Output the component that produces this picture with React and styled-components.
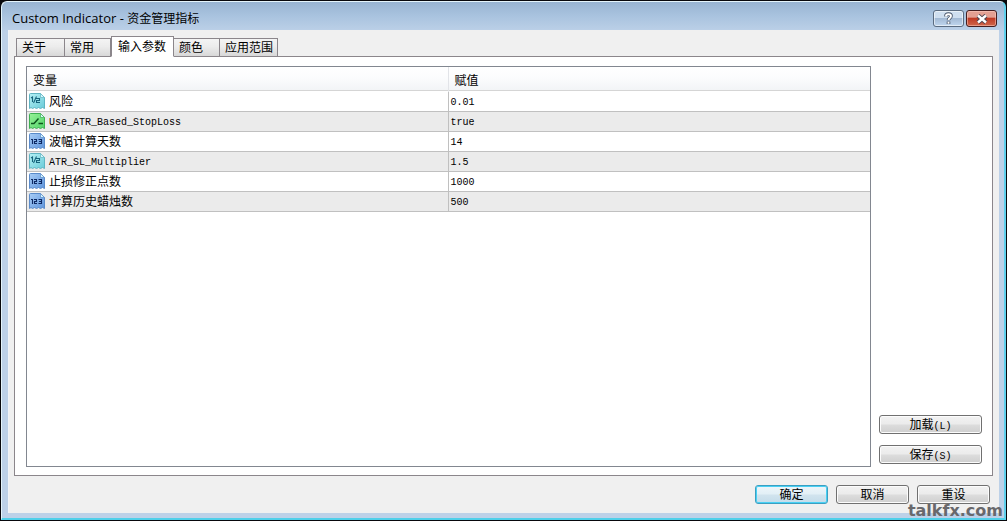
import React, { useState } from "react";
import styled, { createGlobalStyle, css } from "styled-components";

const GlobalStyle = createGlobalStyle`
  * { box-sizing: border-box; }
  body {
    margin: 0;
    background: #08080c;
    color: #000;
    font: 12px/16px "Liberation Mono", "Noto Sans CJK SC", monospace;
  }
`;

const Window = styled.div`
  position: relative;
  display: flex;
  flex-direction: column;
  min-height: calc(100vh - 2px);
  margin: 1px;
  padding: 0 5px 5px 6px;
  border: 1px solid #e4f4fb;
  border-right: 2px solid #5fd0ec;
  border-bottom: 2px solid #4fd0ea;
  border-radius: 6px 6px 0 0;
  background: linear-gradient(#98b4d2 0, #a9c3df 14px, #bdd1e8 30px, #bdd1e8 100%);
`;

const TitleBar = styled.header`
  display: flex;
  align-items: flex-start;
  justify-content: space-between;
  height: 28px;
  padding: 8px 2px 0 4px;
`;

const Title = styled.h1`
  margin: 0;
  font: 12px/16px "Open Sans", "Noto Sans CJK SC", sans-serif;
  white-space: pre;
`;

const TitlePrefix = styled.span`
  font-size: 13px;
`;

const CaptionButtons = styled.div`
  display: flex;
  gap: 2px;
`;

const CaptionButton = styled.button`
  display: flex;
  align-items: center;
  justify-content: center;
  width: 31px;
  height: 17px;
  padding: 0;
  border: 1px solid #5a6b80;
  border-radius: 3px;
  box-shadow: inset 0 0 0 1px rgba(255, 255, 255, 0.55);
  background: linear-gradient(#cfdff0 0 45%, #a3bad5 50%, #c0d6ee);
  ${(p) =>
    p.$close &&
    css`
      border-color: #431e20;
      box-shadow: inset 0 0 0 1px rgba(255, 210, 200, 0.5);
      background: linear-gradient(#e3a093 0 40%, #bf3b25 50%, #d0674b);
    `}
`;

const Client = styled.main`
  display: flex;
  flex: 1;
  flex-direction: column;
  padding: 6px 6px 9px 5px;
  border-left: 1px solid #f1f4f8;
  background: #f0f0f0;
`;

const TabList = styled.div`
  position: relative;
  display: flex;
  align-items: flex-end;
  height: 21px;
  padding-left: 2px;
  margin-bottom: -1px;
`;

const Tab = styled.button`
  width: ${(p) => p.$width}px;
  height: 19px;
  padding: 2px 0 0 5px;
  border: 1px solid #8b868b;
  border-left-width: ${(p) => (p.$first ? 1 : 0)}px;
  background: linear-gradient(#f4f4f4, #ececec 45%, #d8d8d8);
  font: inherit;
  line-height: 16px;
  text-align: left;
  white-space: nowrap;
  ${(p) =>
    p.$active &&
    css`
      height: 21px;
      padding-left: 6px;
      border-bottom-color: #fff;
      background: #fff;
    `}
`;

const Panel = styled.section`
  display: flex;
  flex: 1;
  gap: 8px;
  padding: 9px 10px 8px 11px;
  border: 1px solid #8b868b;
  background: #fff;
`;

const ListBox = styled.div`
  flex: 1;
  border: 1px solid #828790;
  background: #fff;
`;

const Table = styled.table`
  width: 100%;
  table-layout: fixed;
  border-collapse: separate;
  border-spacing: 0;
`;

const HeadCell = styled.th`
  height: 25px;
  padding: 4px 6px 0;
  border-right: ${(p) => (p.$last ? 0 : 1)}px solid #e2e4e8;
  box-shadow: inset 0 -1px #fff, inset 0 -2px #d5d5d5;
  background: linear-gradient(#fff, #fbfcfd 45%, #f1f3f5);
  font-weight: normal;
  text-align: left;
`;

const Row = styled.tr`
  background: #fff;
  &:nth-child(even) {
    background: #ebebeb;
  }
`;

const Cell = styled.td`
  height: 20px;
  padding: ${(p) => (p.$value ? 3 : 1)}px 2px 0;
  border-right: ${(p) => (p.$value ? 0 : 1)}px solid #c0c0c0;
  border-bottom: 1px solid #c0c0c0;
  font-size: ${(p) => (p.$latin ? 10 : 12)}px;
  line-height: 16px;
`;

const Variable = styled.div`
  display: flex;
  align-items: flex-start;
  gap: 4px;
  height: 18px;
`;

const VariableName = styled.span`
  padding-top: 2px;
`;

const SideButtons = styled.div`
  display: flex;
  flex-direction: column;
  justify-content: flex-end;
  gap: 11px;
  width: 103px;
  padding-bottom: 3px;
`;

const PushButton = styled.button`
  height: 19px;
  padding: 2px 0 0;
  border: 1px solid #707070;
  border-radius: 3px;
  box-shadow: inset 0 0 0 1px #fcfcfc;
  background: linear-gradient(#f2f2f2, #ebebeb 49%, #dddddd 51%, #cfcfcf);
  font: inherit;
  line-height: 16px;
  ${(p) =>
    p.$primary &&
    css`
      border-color: #3c9fc1;
      box-shadow: inset 0 0 0 1px #48d0f4;
      background: linear-gradient(#eef6fa, #e2eff6 49%, #d2e4ee 51%, #c4dcea);
    `}
`;

const Hotkey = styled.span`
  font-size: 10px;
`;

const Footer = styled.footer`
  display: flex;
  justify-content: flex-end;
  gap: 8px;
  padding: 9px 3px 0 0;

  ${PushButton} {
    width: 73px;
  }
`;

const Watermark = styled.span`
  position: absolute;
  right: 1px;
  bottom: -3px;
  color: #68686c;
  font: bold 16px/20px "DejaVu Sans", sans-serif;
  pointer-events: none;
`;

const iconColors = {
  double: { light: "#b4f0f5", dark: "#6bcbd8", edge: "#5fb4c2", ink: "#17647c" },
  bool: { light: "#97f297", dark: "#52d46a", edge: "#3eb052", ink: "#0d541d" },
  int: { light: "#a9cdf6", dark: "#5f95dc", edge: "#5a8bca", ink: "#0e2963" },
};

const iconMarks = {
  double: "M2 5L3.5 4V9M7.5 3.5L4.5 10M7 5.5H10.5V7.5H7.5V9.5H11",
  bool: "M2 10.5H5L9.5 5.5M9.5 10.5H14",
  int: "M2 6.5H3.5V11M5 6.5H7.5V8.5H5.5V10.5H8M9.5 6.5H12.5V10.5H9.5M10 8.5H12.5",
};

function TypeIcon({ type }) {
  const c = iconColors[type];
  const id = `page-${type}`;
  return (
    <svg width="16" height="17" viewBox="0 0 16 17" aria-hidden="true">
      <defs>
        <linearGradient id={id} x1="0" y1="0" x2="1" y2="1">
          <stop offset="0" stopColor={c.light} />
          <stop offset="1" stopColor={c.dark} />
        </linearGradient>
      </defs>
      <path
        d="M.5 1.5Q.5.5 1.5.5H11.5L15.5 4.5V15.5L13.5 14.5 11.5 15.5 9.5 14.5 7.5 15.5 5.5 14.5 3.5 15.5 2 14.5.5 15.5Z"
        fill={`url(#${id})`}
        stroke={c.edge}
      />
      <path d="M11.5.5V4.5H15.5Z" fill="#d5f5fb" stroke={c.edge} strokeWidth=".7" />
      <path d={iconMarks[type]} fill="none" stroke={c.ink} strokeWidth={type === "bool" ? 1.4 : 1.1} />
    </svg>
  );
}

const tabs = [
  { label: "关于", width: 49 },
  { label: "常用", width: 46 },
  { label: "输入参数", width: 63 },
  { label: "颜色", width: 46 },
  { label: "应用范围", width: 58 },
];

const inputs = [
  { type: "double", name: "风险", value: "0.01" },
  { type: "bool", name: "Use_ATR_Based_StopLoss", value: "true", latin: true },
  { type: "int", name: "波幅计算天数", value: "14" },
  { type: "double", name: "ATR_SL_Multiplier", value: "1.5", latin: true },
  { type: "int", name: "止损修正点数", value: "1000" },
  { type: "int", name: "计算历史蜡烛数", value: "500" },
];

export default function App() {
  const [active, setActive] = useState(2);
  return (
    <>
      <GlobalStyle />
      <Window>
        <TitleBar>
          <Title>
            <TitlePrefix>Custom Indicator - </TitlePrefix>资金管理指标
          </Title>
          <CaptionButtons>
            <CaptionButton type="button" aria-label="Help">
              <svg width="9" height="13" viewBox="0 0 9 13" fill="none">
                <path d="M2 4.5V4C2 1.4 7 1.4 7 4 7 6 4.5 5.8 4.5 8.2M4.5 9.5V12" stroke="#49566a" strokeWidth="3.6" />
                <path d="M2 4.4V4C2 1.6 7 1.6 7 4 7 6 4.5 5.8 4.5 8M4.5 9.7V11.7" stroke="#fff" strokeWidth="1.9" />
              </svg>
            </CaptionButton>
            <CaptionButton type="button" aria-label="Close" $close>
              <svg width="12" height="10" viewBox="0 0 12 10" fill="none">
                <path d="M2 1.5L10 8.5M10 1.5L2 8.5" stroke="#4d4550" strokeWidth="4.4" />
                <path d="M2 1.5L10 8.5M10 1.5L2 8.5" stroke="#fff" strokeWidth="2.4" />
              </svg>
            </CaptionButton>
          </CaptionButtons>
        </TitleBar>
        <Client>
          <TabList role="tablist">
            {tabs.map((tab, i) => (
              <Tab
                key={tab.label}
                type="button"
                role="tab"
                aria-selected={i === active}
                $active={i === active}
                $first={i === 0 || i === active}
                $width={tab.width}
                onClick={() => setActive(i)}
              >
                {tab.label}
              </Tab>
            ))}
          </TabList>
          <Panel role="tabpanel">
            <ListBox>
              <Table>
                <thead>
                  <tr>
                    <HeadCell>变量</HeadCell>
                    <HeadCell $last>赋值</HeadCell>
                  </tr>
                </thead>
                <tbody>
                  {inputs.map((item) => (
                    <Row key={item.name}>
                      <Cell $latin={item.latin}>
                        <Variable>
                          <TypeIcon type={item.type} />
                          <VariableName>{item.name}</VariableName>
                        </Variable>
                      </Cell>
                      <Cell $latin $value>
                        {item.value}
                      </Cell>
                    </Row>
                  ))}
                </tbody>
              </Table>
            </ListBox>
            <SideButtons>
              <PushButton type="button">
                加载<Hotkey>(L)</Hotkey>
              </PushButton>
              <PushButton type="button">
                保存<Hotkey>(S)</Hotkey>
              </PushButton>
            </SideButtons>
          </Panel>
          <Footer>
            <PushButton type="button" $primary>
              确定
            </PushButton>
            <PushButton type="button">取消</PushButton>
            <PushButton type="button">重设</PushButton>
          </Footer>
        </Client>
        <Watermark>talkfx.com</Watermark>
      </Window>
    </>
  );
}
